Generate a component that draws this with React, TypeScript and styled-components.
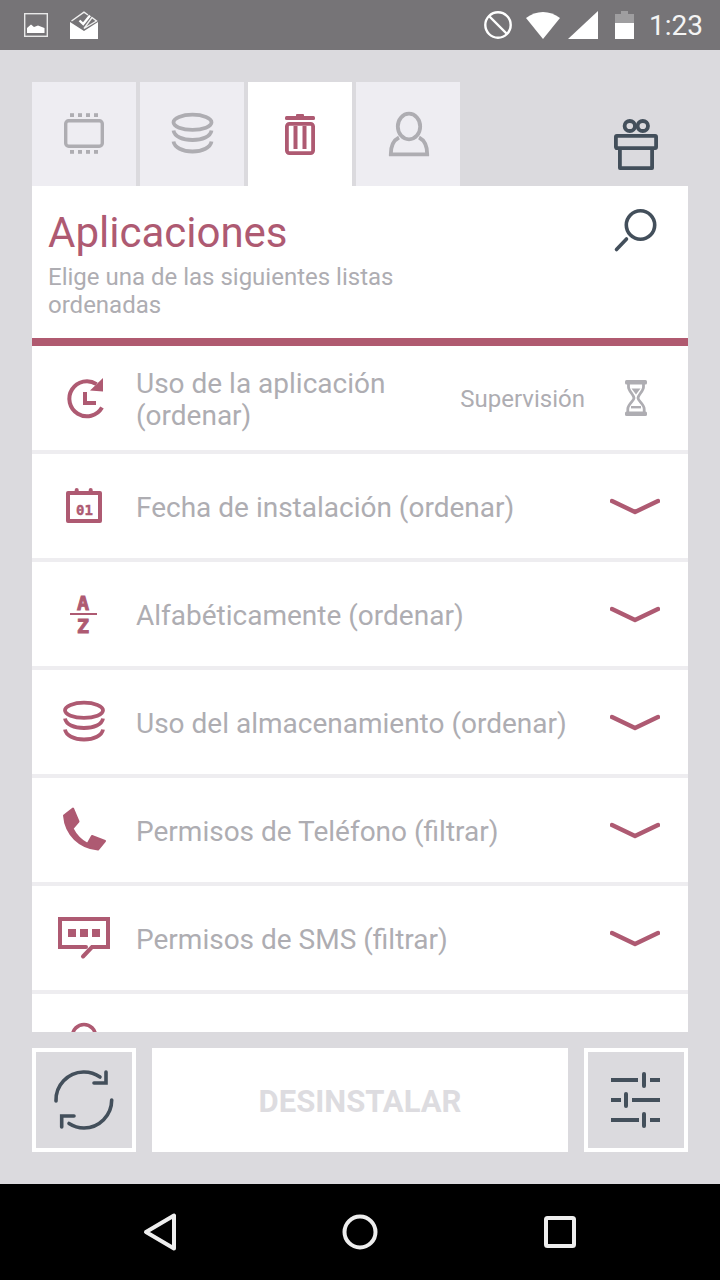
import React from "react";
import styled, { createGlobalStyle } from "styled-components";

const ACCENT = "#ae5a72";
const SLATE = "#434f5b";
const MUTED = "#aeadb2";

const Global = createGlobalStyle`
  html, body { margin: 0; padding: 0; background: #000; }
  * { box-sizing: border-box; }
  body { font-family: Roboto, "Liberation Sans", sans-serif; }
`;

const Screen = styled.div`
  width: 720px;
  height: 1280px;
  display: flex;
  flex-direction: column;
  overflow: hidden;
  background: #dbdade;
`;

const StatusBar = styled.div`
  height: 50px;
  flex: none;
  display: flex;
  align-items: center;
  background: #767477;
  color: #fff;
  padding: 0 17px 0 24px;
`;

const StatusLeft = styled.div`
  display: flex;
  align-items: center;
  gap: 22px;
`;

const StatusRight = styled.div`
  margin-left: auto;
  display: flex;
  align-items: center;
`;

const StatusSvg = styled.svg<{ $ml?: number }>`
  display: block;
  margin-left: ${(p) => p.$ml ?? 0}px;
`;

const Clock = styled.span`
  font-size: 28px;
  line-height: 50px;
  margin-left: 15px;
  padding-top: 1px;
  color: #f4f4f4;
`;

const Main = styled.main`
  flex: 1;
  min-height: 0;
  display: flex;
  flex-direction: column;
  padding: 32px 32px 32px;
`;

const TopRow = styled.div`
  display: flex;
  flex: none;
  align-items: flex-end;
  gap: 4px;
`;

const Tab = styled.div<{ $active?: boolean }>`
  width: 104px;
  height: 104px;
  display: flex;
  align-items: center;
  justify-content: center;
  background: ${(p) => (p.$active ? "#fff" : "#eeedf2")};
  color: ${(p) => (p.$active ? ACCENT : MUTED)};
`;

const GiftSlot = styled.div`
  margin-left: auto;
  margin-right: 28px;
  margin-bottom: 14px;
  color: ${SLATE};
`;

const Panel = styled.section`
  flex: 1;
  min-height: 0;
  overflow: hidden;
  background: #eeedf0;
  display: flex;
  flex-direction: column;
`;

const Header = styled.header`
  flex: none;
  height: 160px;
  background: #fff;
  border-bottom: 8px solid #b05a70;
  padding: 23px 28px 0 16px;
  display: flex;
  justify-content: space-between;
`;

const Title = styled.h1`
  margin: 0;
  font-size: 42px;
  line-height: 48px;
  font-weight: 400;
  color: ${ACCENT};
`;

const Subtitle = styled.p`
  margin: 6px 0 0;
  font-size: 24px;
  line-height: 28px;
  color: ${MUTED};
  max-width: 400px;
`;

const SearchSvg = styled.svg`
  flex: none;
  margin-top: -1px;
  color: ${SLATE};
`;

const RowList = styled.div`
  display: flex;
  flex-direction: column;
  gap: 4px;
`;

const Row = styled.div`
  flex: none;
  height: 104px;
  background: #fff;
  display: flex;
  align-items: center;
`;

const IconSlot = styled.div`
  width: 104px;
  flex: none;
  display: flex;
  justify-content: center;
  color: ${ACCENT};
`;

const RowText = styled.div`
  flex: 1;
  min-width: 0;
  padding-top: 3px;
  font-size: 28px;
  line-height: 32px;
  color: ${MUTED};
`;

const Supervision = styled.span`
  flex: none;
  padding-top: 2px;
  font-size: 24px;
  line-height: 28px;
  color: ${MUTED};
`;

const HourglassSlot = styled.div`
  flex: none;
  margin: 0 40px 0 39px;
  color: ${MUTED};
`;

const ChevronSlot = styled.div`
  flex: none;
  margin-right: 28px;
  color: ${ACCENT};
`;

const Footer = styled.footer`
  flex: none;
  margin-top: 16px;
  height: 104px;
  display: flex;
  gap: 16px;
`;

const ToolButton = styled.button`
  width: 104px;
  height: 104px;
  padding: 0;
  flex: none;
  border: 4px solid #fff;
  background: transparent;
  color: ${SLATE};
  display: flex;
  align-items: center;
  justify-content: center;
`;

const UninstallButton = styled.button`
  flex: 1;
  border: 0;
  background: #fff;
  color: #dddce0;
  font-family: Roboto, "Liberation Sans", sans-serif;
  font-size: 31px;
  font-weight: 700;
  padding: 2px 0 0;
`;

const NavBar = styled.nav`
  flex: none;
  height: 96px;
  background: #000;
  display: grid;
  grid-template-columns: repeat(3, 200px);
  justify-content: center;
  align-items: center;
  color: #eeeeee;
`;

const NavItem = styled.div`
  display: flex;
  justify-content: center;
`;

const IconText = styled.text<{ $weight: number }>`
  font-family: "DejaVu Sans Mono", "Liberation Mono", monospace;
  font-weight: 700;
  fill: currentColor;
  stroke: currentColor;
  stroke-width: ${(p) => p.$weight}px;
`;

const RowSvg = styled.svg`
  display: block;
`;

const S = {
  fill: "none",
  stroke: "currentColor",
} as const;

const ChipIcon = () => (
  <svg width="48" height="48" viewBox="0 0 48 48">
    <rect x="5.7" y="10.7" width="36.6" height="25.6" rx="3" {...S} strokeWidth="3.4" />
    {[10, 18, 26, 34].map((x) => (
      <g key={x} fill="currentColor">
        <rect x={x} y="3.2" width="4" height="3.8" />
        <rect x={x} y="40" width="4" height="3.8" />
      </g>
    ))}
  </svg>
);

const DbPaths = () => (
  <g {...S} strokeWidth="3.8">
    <ellipse cx="24.5" cy="12.3" rx="19" ry="7.6" />
    <path d="M5.5 20.5c1 6 9 9.5 19 9.5s18-3.5 19-9.5" />
    <path d="M5.5 31.5c1 6 9 10 19 10s18-4 19-10" />
  </g>
);

const DbIcon = () => (
  <svg width="48" height="48" viewBox="0 0 48 48">
    <DbPaths />
  </svg>
);

const TrashIcon = () => (
  <svg width="48" height="48" viewBox="0 0 48 48">
    <g fill="currentColor">
      <rect x="20" y="4" width="8" height="3" rx="1" />
      <rect x="9" y="6" width="30" height="4" rx="1.5" />
      <rect x="17.5" y="16" width="4" height="23" />
      <rect x="26.5" y="16" width="4" height="23" />
    </g>
    <rect x="10.9" y="13.9" width="26.2" height="29.2" rx="2.5" {...S} strokeWidth="3.8" />
  </svg>
);

const PersonIcon = () => (
  <svg width="48" height="48" viewBox="0 0 48 48">
    <g {...S} strokeWidth="3.8">
      <ellipse cx="25" cy="16.5" rx="11.2" ry="12.8" />
      <path d="M15 27.5C9 30.5 6.8 36.5 6.8 44.3H43.2C43.2 36.5 41 30.5 35 27.5" />
    </g>
  </svg>
);

const GiftIcon = () => (
  <RowSvg width="48" height="56" viewBox="0 0 48 56">
    <g {...S} strokeWidth="3.8" strokeLinejoin="round">
      <rect x="3.9" y="19.9" width="40.2" height="12.2" rx="1" />
      <path d="M7.9 32.5V52.1H40.1V32.5" />
      <ellipse cx="17.8" cy="10" rx="5.2" ry="5" />
      <ellipse cx="30.8" cy="10" rx="5.2" ry="5" />
    </g>
  </RowSvg>
);

const SearchIcon = () => (
  <SearchSvg width="48" height="48" viewBox="0 0 48 48">
    <g {...S} strokeWidth="3.6" strokeLinecap="round">
      <circle cx="28.5" cy="17" r="14.2" />
      <path d="M14.5 31L4.5 41.5" />
    </g>
  </SearchSvg>
);

const HistoryIcon = () => (
  <RowSvg width="56" height="56" viewBox="0 0 56 56">
    <g {...S} strokeWidth="4">
      <path d="M40.5 14.2A17.5 17.5 0 1 0 46 37.5" />
      <path d="M29 22V33H40" />
    </g>
    <path d="M34 20.5L47 8V21.5Z" fill="currentColor" />
  </RowSvg>
);

const CalendarIcon = () => (
  <RowSvg width="56" height="56" viewBox="0 0 56 56">
    <rect x="12" y="15" width="32" height="28" {...S} strokeWidth="4" strokeLinejoin="round" />
    <g fill="currentColor">
      <rect x="18.7" y="10" width="4" height="6" rx="2" />
      <rect x="32.7" y="10" width="4" height="6" rx="2" />
    </g>
    <IconText $weight={0.4} x="28.5" y="36.5" fontSize="14" textAnchor="middle">01</IconText>
  </RowSvg>
);

const AzIcon = () => (
  <RowSvg width="56" height="56" viewBox="0 0 56 56">
    <IconText $weight={1} x="27" y="24" fontSize="20" textAnchor="middle">A</IconText>
    <rect x="14" y="27" width="27" height="2" fill="currentColor" />
    <IconText $weight={1} x="27" y="47" fontSize="20" textAnchor="middle">Z</IconText>
  </RowSvg>
);

const StorageIcon = () => (
  <RowSvg width="56" height="56" viewBox="0 0 56 56">
    <g transform="translate(3.5 4)">
      <DbPaths />
    </g>
  </RowSvg>
);

const PhoneIcon = () => (
  <RowSvg width="56" height="56" viewBox="0 0 56 56">
    <path
      d="M8 13.5L17 6.5L22.5 19.5L16.5 26.5C20 33.5 25 38.5 31.5 42L36 34L49 39L42 47.5C24 46 9.5 33 8 13.5Z"
      fill="currentColor"
      stroke="currentColor"
      strokeWidth="2"
      strokeLinejoin="round"
    />
  </RowSvg>
);

const SmsIcon = () => (
  <RowSvg width="56" height="56" viewBox="0 0 56 56">
    <path d="M30 37H4V9H52V37H36L27 46.5" {...S} strokeWidth="4" strokeLinecap="round" />
    <g fill="currentColor">
      <rect x="12" y="19" width="8" height="8" />
      <rect x="24" y="19" width="8" height="8" />
      <rect x="36" y="19" width="8" height="8" />
    </g>
  </RowSvg>
);

const PinIcon = () => (
  <RowSvg width="56" height="56" viewBox="0 0 56 56">
    <path d="M28 46C20 35 16.5 27 16.5 18A11.5 11.5 0 0 1 39.5 18C39.5 27 36 35 28 46Z" {...S} strokeWidth="3.6" />
  </RowSvg>
);

const HourglassIcon = () => (
  <RowSvg width="24" height="38" viewBox="0 0 24 38">
    <g fill="currentColor">
      <rect x="1" y="1" width="22" height="4.4" rx="1.5" />
      <rect x="1" y="32.6" width="22" height="4.4" rx="1.5" />
      <path d="M7.5 9.5H16.5L12 15.5Z" />
      <rect x="7" y="27" width="10" height="2.4" />
    </g>
    <path d="M4.5 5V8C4.5 12 10 16 10 19C10 22 3.8 25 3.8 30V33M19.5 5V8C19.5 12 14 16 14 19C14 22 20.2 25 20.2 30V33" {...S} strokeWidth="2.8" />
  </RowSvg>
);

const Chevron = () => (
  <RowSvg width="50" height="18" viewBox="0 0 50 18">
    <path d="M2 4L25 15L48 4" {...S} strokeWidth="4.4" strokeLinecap="round" strokeLinejoin="round" />
  </RowSvg>
);

const SyncIcon = () => (
  <svg width="64" height="64" viewBox="0 0 64 64">
    <g {...S} strokeWidth="3.6" strokeLinecap="round">
      <path d="M4 33A28 28 0 0 1 31.3 4A28 28 0 0 1 48 9" />
      <path d="M54 4V15H42" />
      <path d="M59.7 32A28 28 0 0 1 32 60A28 28 0 0 1 17 55.5" />
      <path d="M9.7 59V48H22" />
    </g>
  </svg>
);

const SlidersIcon = () => (
  <svg width="64" height="64" viewBox="0 0 64 64">
    <g {...S} strokeWidth="4">
      <path d="M7 12H34M46 12H56" />
      <path d="M7 32H17M28 32H56" />
      <path d="M7 52H35M46 52H56" />
    </g>
    <g {...S} strokeWidth="4" strokeLinecap="round">
      <path d="M40 6V18" />
      <path d="M22 26V38" />
      <path d="M40 46V58" />
    </g>
  </svg>
);

const rows = [
  { icon: <CalendarIcon />, label: "Fecha de instalación (ordenar)" },
  { icon: <AzIcon />, label: "Alfabéticamente (ordenar)" },
  { icon: <StorageIcon />, label: "Uso del almacenamiento (ordenar)" },
  { icon: <PhoneIcon />, label: "Permisos de Teléfono (filtrar)" },
  { icon: <SmsIcon />, label: "Permisos de SMS (filtrar)" },
];

export default function App() {
  return (
    <Screen>
      <Global />
      <StatusBar>
        <StatusLeft>
          <StatusSvg width="24" height="24" viewBox="0 0 24 24">
            <rect x="0.7" y="0.7" width="22.6" height="22.6" fill="none" stroke="#e8e8e8" strokeWidth="1.4" />
            <path d="M3 20V15L7 11.5L10 14L14 12.5L20.5 15V20Z" fill="#fff" />
          </StatusSvg>
          <StatusSvg width="28" height="28" viewBox="0 0 28 28">
            <path d="M0 11L14 20L28 11V28H0Z" fill="#fff" />
            <path d="M1.5 10L14 1.2L18 4M22 6.5L26.5 10L14 17.5Z" fill="none" stroke="#f0f0f0" strokeWidth="1.4" />
            <path d="M9.5 9.5L13.2 13L20 4.5" fill="none" stroke="#fff" strokeWidth="2.4" />
          </StatusSvg>
        </StatusLeft>
        <StatusRight>
          <StatusSvg width="28" height="28" viewBox="0 0 28 28">
            <circle cx="14" cy="14" r="12.7" fill="none" stroke="#fff" strokeWidth="2.4" />
            <path d="M5 5L23 23" stroke="#fff" strokeWidth="2.4" />
          </StatusSvg>
          <StatusSvg width="34" height="28" viewBox="0 0 34 28" $ml={14}>
            <path d="M0 7C10 -1 24 -1 34 7L17 28Z" fill="#fff" />
          </StatusSvg>
          <StatusSvg width="30" height="28" viewBox="0 0 30 28" $ml={8}>
            <path d="M30 0V28H0Z" fill="#fff" />
          </StatusSvg>
          <StatusSvg width="19" height="28" viewBox="0 0 19 28" $ml={17}>
            <path d="M6 0H13V3H6Z" fill="#fff" opacity="0.3" />
            <path d="M0 3H19V12H0Z" fill="#fff" opacity="0.3" />
            <path d="M0 12H19V28H0Z" fill="#fff" />
          </StatusSvg>
          <Clock>1:23</Clock>
        </StatusRight>
      </StatusBar>

      <Main>
        <TopRow>
          <Tab><ChipIcon /></Tab>
          <Tab><DbIcon /></Tab>
          <Tab $active><TrashIcon /></Tab>
          <Tab><PersonIcon /></Tab>
          <GiftSlot><GiftIcon /></GiftSlot>
        </TopRow>

        <Panel>
          <Header>
            <div>
              <Title>Aplicaciones</Title>
              <Subtitle>Elige una de las siguientes listas ordenadas</Subtitle>
            </div>
            <SearchIcon />
          </Header>

          <RowList>
            <Row>
              <IconSlot><HistoryIcon /></IconSlot>
              <RowText>Uso de la aplicación (ordenar)</RowText>
              <Supervision>Supervisión</Supervision>
              <HourglassSlot><HourglassIcon /></HourglassSlot>
            </Row>

            {rows.map((r) => (
              <Row key={r.label}>
                <IconSlot>{r.icon}</IconSlot>
                <RowText>{r.label}</RowText>
                <ChevronSlot><Chevron /></ChevronSlot>
              </Row>
            ))}

            <Row>
              <IconSlot><PinIcon /></IconSlot>
            </Row>
          </RowList>
        </Panel>

        <Footer>
          <ToolButton><SyncIcon /></ToolButton>
          <UninstallButton>DESINSTALAR</UninstallButton>
          <ToolButton><SlidersIcon /></ToolButton>
        </Footer>
      </Main>

      <NavBar>
        <NavItem>
          <svg width="36" height="40" viewBox="0 0 36 40">
            <path d="M32 3.5V36.5L4 20Z" fill="none" stroke="currentColor" strokeWidth="4" strokeLinejoin="round" />
          </svg>
        </NavItem>
        <NavItem>
          <svg width="36" height="36" viewBox="0 0 36 36">
            <circle cx="18" cy="18" r="15.5" fill="none" stroke="currentColor" strokeWidth="4" />
          </svg>
        </NavItem>
        <NavItem>
          <svg width="36" height="36" viewBox="0 0 36 36">
            <rect x="4" y="4" width="28" height="28" rx="1.5" fill="none" stroke="currentColor" strokeWidth="4" />
          </svg>
        </NavItem>
      </NavBar>
    </Screen>
  );
}
